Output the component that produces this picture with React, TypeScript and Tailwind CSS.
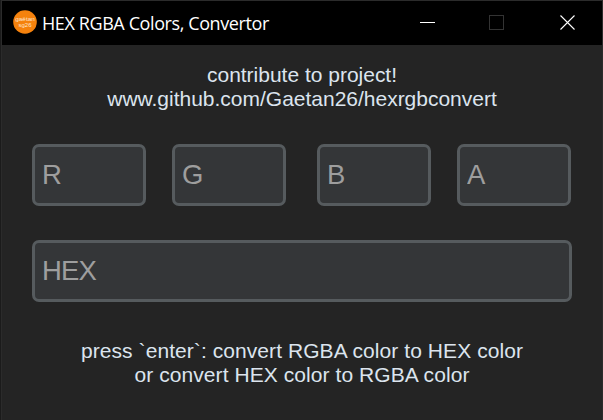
import type { ReactNode } from "react";

const field =
  "h-[62px] rounded-[7px] border-[3px] border-[#565b5e] bg-[#343638] pl-[7px] text-[27.5px] leading-[56px] tracking-[-0.9px] text-[#9e9e9e] outline-none placeholder:text-[#9e9e9e] placeholder:opacity-100";

function Note({ children, className }: { children: ReactNode; className: string }) {
  return (
    <p className={`text-center text-[21px] leading-6 whitespace-nowrap text-[#dce4ee] ${className}`}>
      {children}
    </p>
  );
}

function TitleBar() {
  return (
    <header className="flex h-11 items-start bg-black text-white">
      <svg className="mt-[9px] ml-[11px] shrink-0" width="24" height="24" viewBox="0 0 24 24">
        <circle cx="12" cy="12" r="11.8" fill="#f5820d" />
        <g textAnchor="middle" fontSize="5.2" fill="#ffe6cc" fontFamily="Liberation Sans, Arial, sans-serif">
          <text x="12" y="11" textLength="19.5" lengthAdjust="spacingAndGlyphs">gaëtan</text>
          <text x="12" y="17" textLength="13" lengthAdjust="spacingAndGlyphs">sg26</text>
        </g>
      </svg>
      <h1 className="ml-[5px] w-[371px] pt-[10px] font-['Open_Sans',sans-serif] text-[18px] leading-6 font-normal tracking-[-0.4px] whitespace-nowrap">
        HEX RGBA Colors, Convertor
      </h1>
      <svg className="mt-[14px] shrink-0" width="163" height="16" viewBox="0 0 163 16" fill="none">
        <path d="M7 7.5H22" stroke="#fff" />
        <rect x="76.5" y="0.5" width="14" height="14" stroke="#333" />
        <path d="M147.5 0.5L161.5 14.5M161.5 0.5L147.5 14.5" stroke="#fff" strokeWidth="1.1" />
      </svg>
    </header>
  );
}

export default function App() {
  return (
    <div className="h-[420px] w-[603px] overflow-hidden bg-[#1b1b1b] pl-px font-['Liberation_Sans',Arial,sans-serif]">
      <div className="h-full border-x border-t border-[#2b2b2b] bg-[#242424]">
        <TitleBar />
        <main className="px-[30px] pt-[18px]">
          <Note className="tracking-[-0.01px]">
            contribute to project!
            <br />
            www.github.com/Gaetan26/hexrgbconvert
          </Note>
          <div className="mt-[33px] flex">
            <input className={`${field} w-[114px]`} placeholder="R" aria-label="R" />
            <input className={`${field} ml-[26px] w-[114px]`} placeholder="G" aria-label="G" />
            <input className={`${field} ml-[31px] w-[114px]`} placeholder="B" aria-label="B" />
            <input className={`${field} ml-[26px] w-[114px]`} placeholder="A" aria-label="A" />
          </div>
          <input className={`${field} mt-[34px] block w-[540px]`} placeholder="HEX" aria-label="HEX" />
          <Note className="mt-[37px] tracking-[0.07px]">
            press `enter`: convert RGBA color to HEX color
            <br />
            or convert HEX color to RGBA color
          </Note>
        </main>
      </div>
    </div>
  );
}
